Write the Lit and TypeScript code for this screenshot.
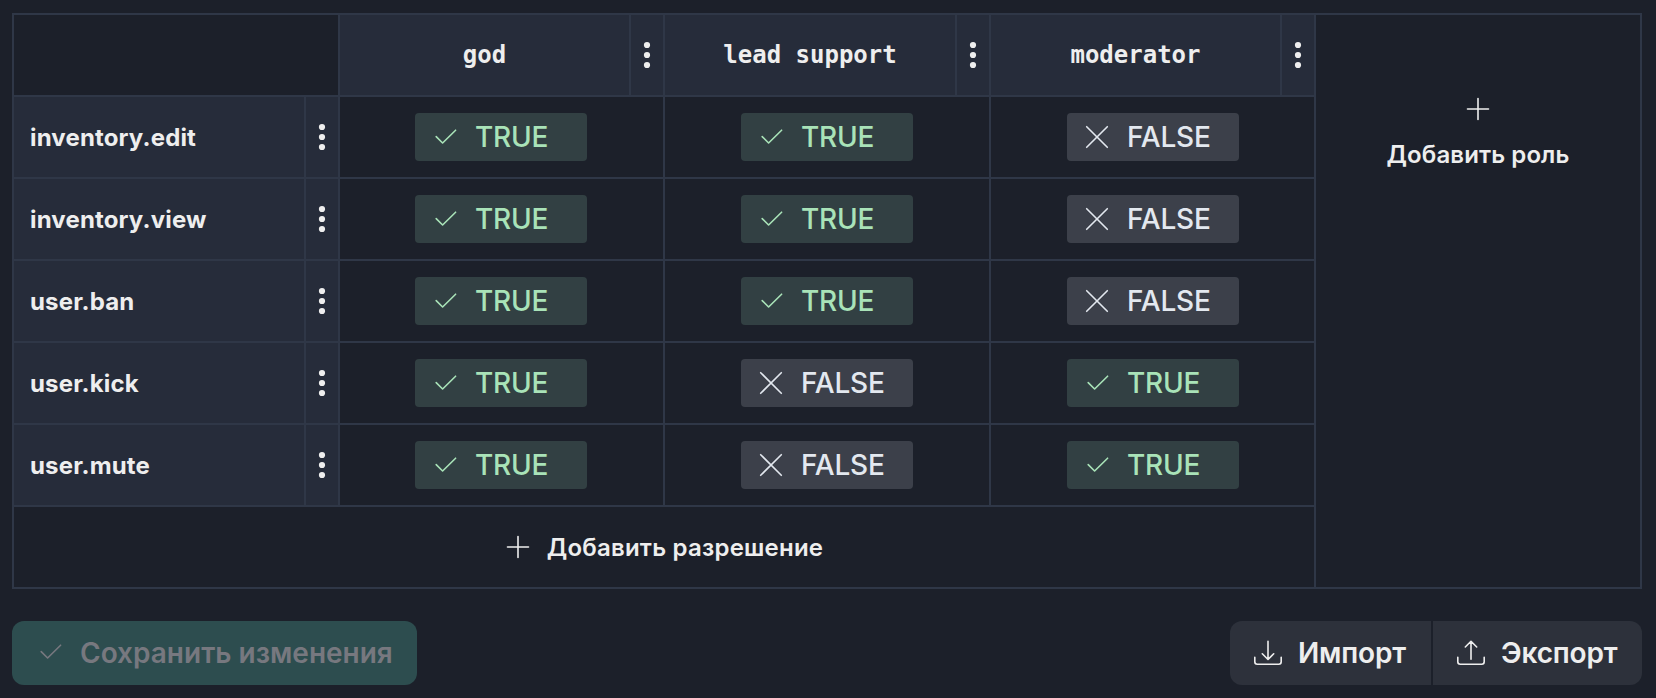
import { LitElement, html, css, svg } from "lit";
import { customElement, property } from "lit/decorators.js";

type IconName = "check" | "cross" | "plus" | "download" | "upload" | "dots";

const GLYPHS: Record<IconName, { w: number; h: number; body: unknown }> = {
  check: { w: 22, h: 16, body: svg`<path d="M1.2 7.6 7.6 14 20.6 1.2"/>` },
  cross: { w: 22, h: 22, body: svg`<path d="M.7 .7 21.3 21.3M21.3 .7 .7 21.3"/>` },
  plus: { w: 22, h: 22, body: svg`<path d="M11 .5V21.5M.5 11H21.5"/>` },
  download: {
    w: 28, h: 26,
    body: svg`<path d="M14 1.3V19.3M8.3 13.8 14 19.5 19.7 13.8M.8 17.2V21.7Q.8 24.2 3.3 24.2H24.7Q27.2 24.2 27.2 21.7V17.2"/>`,
  },
  upload: {
    w: 28, h: 26,
    body: svg`<path d="M14 19.3V1.3M8.3 7 14 1.3 19.7 7M.8 17.2V21.7Q.8 24.2 3.3 24.2H24.7Q27.2 24.2 27.2 21.7V17.2"/>`,
  },
  dots: {
    w: 6, h: 26,
    body: svg`<g fill="currentColor" stroke="none"><circle cx="3" cy="3" r="3.1"/><circle cx="3" cy="13" r="3.1"/><circle cx="3" cy="23" r="3.1"/></g>`,
  },
};

@customElement("ui-icon")
class UiIcon extends LitElement {
  @property() name: IconName = "check";
  static styles = css`
    :host { display: block; flex: none; }
    svg {
      display: block;
      fill: none;
      stroke: currentColor;
      stroke-width: 1.6;
      stroke-linecap: round;
      stroke-linejoin: round;
      overflow: visible;
    }
  `;
  render() {
    const g = GLYPHS[this.name];
    return html`<svg width=${g.w} height=${g.h} viewBox="0 0 ${g.w} ${g.h}">${g.body}</svg>`;
  }
}

@customElement("permission-toggle")
class PermissionToggle extends LitElement {
  @property({ type: Boolean }) granted = false;
  static styles = css`
    :host { display: block; }
    .toggle {
      box-sizing: border-box;
      width: 172px;
      height: 48px;
      display: flex;
      align-items: center;
      padding-left: 19px;
      gap: 19px;
      border-radius: 4px;
      font: 500 28px/48px Inter, sans-serif;
      letter-spacing: -0.2px;
      background: #3c404a;
      color: #e3e8ef;
    }
    .granted { padding-left: 20px; gap: 18px; background: #324043; color: #a9e3b8; }
  `;
  render() {
    return html`<div class="toggle ${this.granted ? "granted" : ""}">
      <ui-icon name=${this.granted ? "check" : "cross"}></ui-icon>
      <span>${this.granted ? "TRUE" : "FALSE"}</span>
    </div>`;
  }
}

const ROLES = ["god", "lead support", "moderator"];
const PERMISSIONS: [string, boolean[]][] = [
  ["inventory.edit", [true, true, false]],
  ["inventory.view", [true, true, false]],
  ["user.ban", [true, true, false]],
  ["user.kick", [true, false, true]],
  ["user.mute", [true, false, true]],
];

@customElement("app-root")
class AppRoot extends LitElement {
  static styles = css`
    :host {
      display: block;
      box-sizing: border-box;
      height: 698px;
      padding: 13px 14px 0 12px;
      background: #1c202a;
      color: #eeeeee;
      font: 600 24px/36px Inter, sans-serif;
      overflow: hidden;
    }
    .matrix {
      display: grid;
      grid-template-columns: 324px 323px 324px 323px 324px;
      grid-template-rows: repeat(7, 80px);
      gap: 2px;
      padding: 2px;
      background: #2f3747;
    }
    .cell {
      background: #1c202a;
      display: flex;
      align-items: center;
      justify-content: center;
    }
    .value { justify-content: flex-start; padding-left: 76px; }
    .value.first { padding-left: 75px; }
    .head {
      display: grid;
      grid-template-columns: 1fr 32px;
      gap: 2px;
    }
    .title, .menu {
      background: #262c3a;
      display: flex;
      align-items: center;
      justify-content: center;
    }
    .role { font: 700 24px/36px "DejaVu Sans Mono", monospace; }
    .permission {
      justify-content: flex-start;
      padding: 2px 0 0 16px;
      font-weight: 700;
      letter-spacing: 0.15px;
    }
    .add-role {
      grid-column: 5;
      grid-row: 1 / span 7;
      flex-direction: column;
      justify-content: flex-start;
      gap: 17px;
      padding-top: 83px;
      letter-spacing: 0.1px;
    }
    .add-permission {
      grid-column: 1 / span 4;
      gap: 18px;
      padding-left: 2px;
      letter-spacing: 0.22px;
    }
    .add-permission span { padding-top: 2px; }
    .footer {
      display: flex;
      justify-content: space-between;
      margin-top: 32px;
      font-size: 28px;
    }
    .button {
      box-sizing: border-box;
      height: 64px;
      display: flex;
      align-items: center;
      background: #2d313b;
    }
    .save {
      width: 405px;
      padding-left: 28px;
      gap: 18px;
      border-radius: 12px;
      background: #2d4d4f;
      color: #77787f;
    }
    .save ui-icon { position: relative; top: -1px; }
    .group { display: flex; gap: 2px; }
    .import { width: 201px; padding-left: 24px; gap: 16px; border-radius: 12px 0 0 12px; }
    .export { width: 209px; padding-left: 24px; gap: 16px; border-radius: 0 12px 12px 0; }
    .group span { letter-spacing: -0.15px; }
  `;

  private head(label: string, kind: string) {
    return html`<div class="head">
      <div class="title ${kind}">${label}</div>
      <div class="menu"><ui-icon name="dots"></ui-icon></div>
    </div>`;
  }

  render() {
    return html`
      <div class="matrix">
        <div class="cell"></div>
        ${ROLES.map((r) => this.head(r, "role"))}
        <div class="cell add-role"><ui-icon name="plus"></ui-icon><span>Добавить роль</span></div>
        ${PERMISSIONS.map(
          ([name, values]) => html`${this.head(name, "permission")}
          ${values.map(
            (v, i) => html`<div class="cell value ${i === 0 ? "first" : ""}">
              <permission-toggle ?granted=${v}></permission-toggle>
            </div>`,
          )}`,
        )}
        <div class="cell add-permission"><ui-icon name="plus"></ui-icon><span>Добавить разрешение</span></div>
      </div>
      <div class="footer">
        <div class="button save"><ui-icon name="check"></ui-icon><span>Сохранить изменения</span></div>
        <div class="group">
          <div class="button import"><ui-icon name="download"></ui-icon><span>Импорт</span></div>
          <div class="button export"><ui-icon name="upload"></ui-icon><span>Экспорт</span></div>
        </div>
      </div>
    `;
  }
}
